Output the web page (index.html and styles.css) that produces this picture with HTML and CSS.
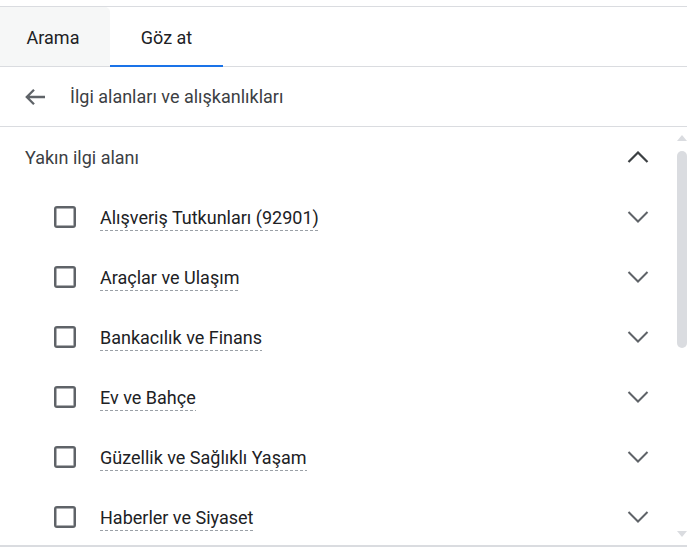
FILE: index.html
```html
<!DOCTYPE html>
<html lang="tr">
<head>
    <meta charset="UTF-8">
    <meta name="viewport" content="width=device-width, initial-scale=1.0">
    <title>Göz at</title>
    <link rel="stylesheet" href="styles.css">
</head>
<body>
    <div class="frame">
        <div class="tabs">
            <div class="tab">Arama</div>
            <div class="tab active">Göz at</div>
        </div>

        <div class="crumb">
            <svg class="back" width="22" height="18" viewBox="0 0 22 18">
                <path d="M21 9H3M10 1.8 2.8 9 10 16.2" fill="none" stroke="#5f6368" stroke-width="2.3"/>
            </svg>
            <span>İlgi alanları ve alışkanlıkları</span>
        </div>

        <div class="panel">
            <div class="list">
                <div class="section">
                    <span>Yakın ilgi alanı</span>
                    <svg class="chev" width="22" height="12" viewBox="0 0 22 12">
                        <path d="M1.5 11 11 1.5 20.5 11" fill="none" stroke="#3c4043" stroke-width="2.2"/>
                    </svg>
                </div>
                <div class="item">
                    <span class="box"></span>
                    <span class="label">Alışveriş Tutkunları (92901)</span>
                    <svg class="chev" width="22" height="12" viewBox="0 0 22 12">
                        <path d="M1.5 1 11 10.5 20.5 1" fill="none" stroke="#5f6368" stroke-width="2"/>
                    </svg>
                </div>
                <div class="item">
                    <span class="box"></span>
                    <span class="label">Araçlar ve Ulaşım</span>
                    <svg class="chev" width="22" height="12" viewBox="0 0 22 12">
                        <path d="M1.5 1 11 10.5 20.5 1" fill="none" stroke="#5f6368" stroke-width="2"/>
                    </svg>
                </div>
                <div class="item">
                    <span class="box"></span>
                    <span class="label">Bankacılık ve Finans</span>
                    <svg class="chev" width="22" height="12" viewBox="0 0 22 12">
                        <path d="M1.5 1 11 10.5 20.5 1" fill="none" stroke="#5f6368" stroke-width="2"/>
                    </svg>
                </div>
                <div class="item">
                    <span class="box"></span>
                    <span class="label">Ev ve Bahçe</span>
                    <svg class="chev" width="22" height="12" viewBox="0 0 22 12">
                        <path d="M1.5 1 11 10.5 20.5 1" fill="none" stroke="#5f6368" stroke-width="2"/>
                    </svg>
                </div>
                <div class="item">
                    <span class="box"></span>
                    <span class="label">Güzellik ve Sağlıklı Yaşam</span>
                    <svg class="chev" width="22" height="12" viewBox="0 0 22 12">
                        <path d="M1.5 1 11 10.5 20.5 1" fill="none" stroke="#5f6368" stroke-width="2"/>
                    </svg>
                </div>
                <div class="item">
                    <span class="box"></span>
                    <span class="label">Haberler ve Siyaset</span>
                    <svg class="chev" width="22" height="12" viewBox="0 0 22 12">
                        <path d="M1.5 1 11 10.5 20.5 1" fill="none" stroke="#5f6368" stroke-width="2"/>
                    </svg>
                </div>
            </div>
            <div class="scrollbar">
                <span class="arrow up"></span>
                <span class="thumb"></span>
                <span class="arrow down"></span>
            </div>
        </div>
    </div>
</body>
</html>
```

FILE: styles.css
```css
body {
    margin: 0;
    background: #fff;
    font-family: Roboto, "Liberation Sans", Arial, sans-serif;
    color: #202124;
}

.frame {
    padding-top: 6px;
}

.tabs {
    display: flex;
    height: 59px;
    border-top: 1px solid #dadce0;
    border-bottom: 1px solid #dadce0;
}

.tab {
    position: relative;
    display: flex;
    align-items: center;
    justify-content: center;
    padding-top: 2px;
    font-size: 18px;
    color: #202124;
}

.tab:first-child {
    width: 106px;
    padding-right: 4px;
    background-color: #f6f7f7;
    border-top-right-radius: 5px;
}

.tab.active {
    width: 113px;
}

.tab.active::after {
    content: "";
    position: absolute;
    left: 0;
    right: 0;
    bottom: -1px;
    height: 2px;
    background-color: #1a73e8;
}

.crumb {
    display: flex;
    align-items: center;
    height: 59px;
    padding-left: 24px;
    border-bottom: 1px solid #dadce0;
    font-size: 18px;
    color: #3c4043;
}

.crumb .back {
    margin-right: 24px;
}

.panel {
    display: flex;
    height: 418px;
    border-bottom: 2px solid #dadce0;
    overflow: hidden;
}

.list {
    flex: 1;
    padding: 0 27px 0 25px;
}

.section,
.item {
    display: flex;
    align-items: center;
    height: 60px;
    font-size: 18px;
}

.section {
    color: #3c4043;
}

.section span {
    flex: 1;
}

.item .label {
    margin-top: 4px;
    margin-right: auto;
    padding-bottom: 3px;
    background-image: linear-gradient(to right, #9aa0a6 60%, transparent 0);
    background-size: 5px 1px;
    background-repeat: repeat-x;
    background-position: 0 100%;
}

.box {
    width: 18px;
    height: 18px;
    margin: 0 24px 0 29px;
    border: 2px solid #5f6368;
    border-radius: 3px;
    box-shadow: inset 0 0 0 0.5px #5f6368;
}

.scrollbar {
    width: 11px;
    display: flex;
    flex-direction: column;
    align-items: center;
    padding-top: 8px;
}

.arrow {
    width: 0;
    height: 0;
    border-left: 5px solid transparent;
    border-right: 5px solid transparent;
}

.arrow.up {
    border-bottom: 6px solid #dadce0;
}

.arrow.down {
    margin-top: auto;
    margin-bottom: 8px;
    border-top: 6px solid #dadce0;
}

.thumb {
    width: 10px;
    height: 197px;
    margin-top: 10px;
    background-color: #dadce0;
    border-radius: 5px;
}
```
